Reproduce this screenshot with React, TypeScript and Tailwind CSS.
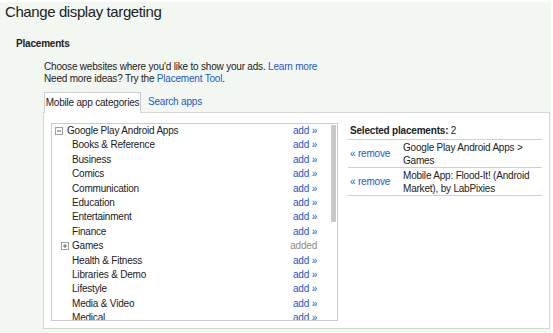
import React from "react";

type Row = { name: string; kind: "parent" | "child" | "collapsed"; status: "add" | "added" };

const rows: Row[] = [
  { name: "Google Play Android Apps", kind: "parent", status: "add" },
  { name: "Books & Reference", kind: "child", status: "add" },
  { name: "Business", kind: "child", status: "add" },
  { name: "Comics", kind: "child", status: "add" },
  { name: "Communication", kind: "child", status: "add" },
  { name: "Education", kind: "child", status: "add" },
  { name: "Entertainment", kind: "child", status: "add" },
  { name: "Finance", kind: "child", status: "add" },
  { name: "Games", kind: "collapsed", status: "added" },
  { name: "Health & Fitness", kind: "child", status: "add" },
  { name: "Libraries & Demo", kind: "child", status: "add" },
  { name: "Lifestyle", kind: "child", status: "add" },
  { name: "Media & Video", kind: "child", status: "add" },
  { name: "Medical", kind: "child", status: "add" },
];

function TreeIcon({ plus }: { plus?: boolean }) {
  return (
    <svg width="8" height="8" viewBox="0 0 8 8" className="shrink-0">
      <rect x="0.5" y="0.5" width="7" height="7" fill="#fff" stroke="#a0a0a0" />
      <line x1="2" y1="4" x2="6" y2="4" stroke="#666" />
      {plus && <line x1="4" y1="2" x2="4" y2="6" stroke="#666" />}
    </svg>
  );
}

export default function App() {
  return (
    <div className="w-[553px] h-[333px] overflow-hidden bg-white pt-[2px] font-['Liberation_Sans',Arial,sans-serif] text-[10px] tracking-[-0.2px] text-[#222]">
      <div className="h-[331px] w-[551px] bg-[#f3f7f2]">
        <div className="pl-[5px] text-[15px] leading-[20px] tracking-[-0.4px] text-[#222]">Change display targeting</div>
        <div className="mt-[15px] pl-[16px] font-bold leading-[13px]">Placements</div>
        <div className="mt-[11px] pl-[44px] leading-[12px]">
          Choose websites where you'd like to show your ads.{" "}
          <span className="text-[#2458cc]">Learn more</span>
          <br />
          Need more ideas? Try the <span className="text-[#2458cc]">Placement Tool</span>.
        </div>
        <div className="mt-[7px] ml-[43px] w-[507px]">
          <div className="flex h-[20px] items-end">
            <div className="relative z-10 -mb-px ml-px h-[21px] w-[97px] border border-b-0 border-[#cfcfcf] bg-white text-center leading-[20px] whitespace-nowrap">
              Mobile app categories
            </div>
            <div className="ml-[7px] leading-[20px] text-[#2458cc]">Search apps</div>
          </div>
          <div className="flex h-[217px] border border-[#d6d6d6] bg-white pl-[7px] pt-[10px]">
            <div className="flex h-[198px] w-[287px] overflow-hidden border border-[#cccccc]">
              <div className="flex-1 pr-[13px]">
                {rows.map((r) => (
                  <div key={r.name} className="flex h-[14.4px] items-center leading-[14.4px] whitespace-nowrap">
                    {r.kind === "parent" && (
                      <div className="flex flex-1 items-center pl-[3px]">
                        <TreeIcon />
                        <span className="ml-[4px]">{r.name}</span>
                      </div>
                    )}
                    {r.kind === "collapsed" && (
                      <div className="flex flex-1 items-center pl-[9px]">
                        <TreeIcon plus />
                        <span className="ml-[3px]">{r.name}</span>
                      </div>
                    )}
                    {r.kind === "child" && <div className="flex-1 pl-[20px]">{r.name}</div>}
                    {r.status === "add" ? (
                      <span className="text-[#2458cc]">add »</span>
                    ) : (
                      <span className="text-[#8a8a8a]">added</span>
                    )}
                  </div>
                ))}
              </div>
              <div className="w-[7px] px-px pt-px">
                <div className="h-[97px] w-[5px] rounded-[1px] bg-[#c8c8c8]" />
              </div>
            </div>
            <div className="ml-[10px] w-[194px]">
              <div className="h-[17px] border-b border-[#d0d0d0] pl-[2px] leading-[15px]">
                <span className="font-bold">Selected placements:</span> 2
              </div>
              <div className="flex h-[28px] items-center border-b border-[#d0d0d0]">
                <div className="w-[55px] shrink-0 pl-[2px] text-[#2458cc]">« remove</div>
                <div className="leading-[13px] whitespace-nowrap">
                  Google Play Android Apps &gt;
                  <br />
                  Games
                </div>
              </div>
              <div className="flex h-[28px] items-center border-b border-[#d0d0d0]">
                <div className="w-[55px] shrink-0 pl-[2px] text-[#2458cc]">« remove</div>
                <div className="leading-[13px] whitespace-nowrap">
                  Mobile App: Flood-It! (Android
                  <br />
                  Market), by LabPixies
                </div>
              </div>
            </div>
          </div>
        </div>
      </div>
    </div>
  );
}
